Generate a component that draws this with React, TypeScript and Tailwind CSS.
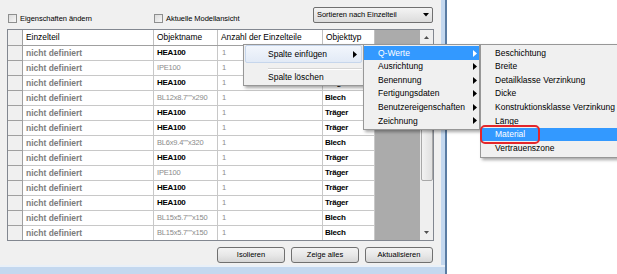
import React from 'react';

type Row = { name: string; bold: boolean; typ: string };

const rows: Row[] = [
  { name: 'HEA100', bold: true, typ: 'Träger' },
  { name: 'IPE100', bold: false, typ: 'Träger' },
  { name: 'HEA100', bold: true, typ: 'Träger' },
  { name: 'BL12x8.7""x290', bold: false, typ: 'Blech' },
  { name: 'HEA100', bold: true, typ: 'Träger' },
  { name: 'HEA100', bold: true, typ: 'Träger' },
  { name: 'BL6x9.4""x320', bold: false, typ: 'Blech' },
  { name: 'HEA100', bold: true, typ: 'Träger' },
  { name: 'IPE100', bold: false, typ: 'Träger' },
  { name: 'HEA100', bold: true, typ: 'Träger' },
  { name: 'HEA100', bold: true, typ: 'Träger' },
  { name: 'BL15x5.7""x150', bold: false, typ: 'Blech' },
  { name: 'BL15x5.7""x150', bold: false, typ: 'Blech' },
];

function RightArrow({ white }: { white?: boolean }) {
  return (
    <svg width="4" height="7" viewBox="0 0 4 7" className="block">
      <polygon points="0,0 4,3.5 0,7" fill={white ? '#ffffff' : '#000000'} />
    </svg>
  );
}

function Check({ label, className }: { label: string; className: string }) {
  return (
    <div className={`flex items-center gap-[3px] h-[9px] ${className}`}>
      <div className="w-[9px] h-[9px] border border-[#8e8f8f] bg-gradient-to-br from-[#dcdcdc] to-[#f6f6f6]" />
      <span className="text-[7.5px] leading-none tracking-[-0.05px]">{label}</span>
    </div>
  );
}

function Btn({ children }: { children: React.ReactNode }) {
  return (
    <div className="w-[68px] h-[16px] rounded-[3px] border border-[#707070] bg-gradient-to-b from-[#f3f3f3] via-[#e8e8e8] to-[#d6d6d6] flex items-center justify-center text-[7.5px] leading-none">
      {children}
    </div>
  );
}

function MenuItem({
  label,
  highlight,
  arrow,
}: {
  label: string;
  highlight?: boolean;
  arrow?: boolean;
}) {
  return (
    <div
      className={`relative h-[13.6px] flex items-center pl-[14px] text-[8.5px] leading-none ${
        highlight ? 'bg-[#3399ff] text-white' : 'text-black'
      }`}
    >
      <span>{label}</span>
      {arrow && (
        <div className="absolute right-[2px] top-[3.5px]">
          <RightArrow white={highlight} />
        </div>
      )}
    </div>
  );
}

export default function App() {
  return (
    <div className="relative w-[617px] h-[274px] overflow-hidden bg-white font-['Liberation_Sans',Arial,sans-serif] text-black">
      <div className="flex h-[274px]">
        <div className="flex flex-col w-[445px]">
          <div className="flex h-[265px]">
            {/* dialog */}
            <div className="w-[441px] h-full bg-[#f0f0f0] pl-[7px] pt-[7px] flex flex-col">
              {/* top row */}
              <div className="flex h-[22px] w-[427px] items-start">
                <Check label="Eigenschaften ändern" className="mt-[7px] ml-[1px] w-[146px]" />
                <Check label="Aktuelle Modellansicht" className="mt-[7px]" />
                <div className="ml-auto mr-[1px] w-[120px] h-[16px] rounded-[2px] border border-[#707070] bg-gradient-to-b from-[#f4f4f4] to-[#dcdcdc] flex items-center pl-[3px] pr-[3px]">
                  <span className="text-[7.5px] leading-none tracking-[-0.05px]">Sortieren nach Einzelteil</span>
                  <svg width="6" height="4" viewBox="0 0 6 4" className="ml-auto block">
                    <polygon points="0,0 6,0 3,3.5" fill="#000" />
                  </svg>
                </div>
              </div>

              {/* table */}
              <div className="w-[427px] h-[212px] border border-[#828790] bg-white flex overflow-hidden">
                <div className="w-[367px] flex flex-col">
                  {/* header */}
                  <div className="flex h-[16px] shrink-0 border-b border-[#a0a0a0] text-[8.4px] leading-none">
                    <div className="w-[15px] h-full bg-[#f0f0f0] border-r border-[#a0a0a0]" />
                    <div className="w-[131px] h-full flex items-center pl-[3px] border-r border-[#c0c0c0]">Einzelteil</div>
                    <div className="w-[64px] h-full flex items-center pl-[3px] border-r border-[#c0c0c0]">Objektname</div>
                    <div className="w-[105px] h-full flex items-center pl-[3px] border-r border-[#c0c0c0]">Anzahl der Einzelteile</div>
                    <div className="w-[52px] h-full flex items-center pl-[3px] border-r border-[#c0c0c0]">Objekttyp</div>
                  </div>
                  {rows.map((r, i) => (
                    <div key={i} className="flex h-[15px] shrink-0 leading-none">
                      <div className="w-[15px] h-full bg-[#f0f0f0] border-r border-b border-[#a0a0a0]" />
                      <div className="w-[131px] h-full flex items-center pl-[3px] border-r border-b border-[#c8c8c8] text-[8.5px] font-bold text-[#7c7c7c]">
                        nicht definiert
                      </div>
                      <div
                        className={`w-[64px] h-full flex items-center pl-[3px] border-r border-b border-[#c8c8c8] whitespace-nowrap overflow-hidden ${
                          r.bold
                            ? 'text-[8px] font-bold text-black tracking-[-0.3px]'
                            : 'text-[7.5px] text-[#8a8a8a] tracking-[-0.2px]'
                        }`}
                      >
                        {r.name}
                      </div>
                      <div className="w-[105px] h-full flex items-center pl-[4px] border-r border-b border-[#c8c8c8] text-[7.5px] text-[#8a8a8a]">
                        1
                      </div>
                      <div className="w-[52px] h-full flex items-center pl-[2px] border-r border-b border-[#c8c8c8] text-[8px] font-bold text-black tracking-[-0.2px]">
                        {r.typ}
                      </div>
                    </div>
                  ))}
                </div>
                <div className="w-[45px] h-full bg-[#ababab]" />
                {/* scrollbar */}
                <div className="w-[13px] h-full bg-[#efefef] flex flex-col">
                  <div className="h-[15px] shrink-0 flex items-center justify-center">
                    <svg width="5" height="3" viewBox="0 0 5 3" className="block">
                      <polygon points="0,3 5,3 2.5,0" fill="#505050" />
                    </svg>
                  </div>
                  <div className="h-[136px] shrink-0 mx-[0.5px] rounded-[2px] border border-[#a8a8a8] bg-gradient-to-r from-[#f2f2f2] to-[#e0e0e0]" />
                  <div className="flex-1" />
                  <div className="h-[15px] shrink-0 flex items-center justify-center">
                    <svg width="5" height="3" viewBox="0 0 5 3" className="block">
                      <polygon points="0,0 5,0 2.5,3" fill="#505050" />
                    </svg>
                  </div>
                </div>
              </div>

              {/* buttons */}
              <div className="mt-[6px] w-[426px] flex justify-end gap-[6px]">
                <Btn>Isolieren</Btn>
                <Btn>Zeige alles</Btn>
                <Btn>Aktualisieren</Btn>
              </div>
            </div>
            <div className="w-[4px] h-full bg-[#c4d8ef]" />
          </div>
          <div className="h-[2px] bg-[#e9f0f8]" />
          <div className="flex-1 bg-[#c4d8ef]" />
        </div>
        <div className="w-[2px] h-full bg-[#5a7ca3]" />
      </div>

      {/* context menu 1 */}
      <div className="absolute left-[243px] top-[44px] w-[121px] h-[42px] border border-[#979797] bg-[#f0f0f0] shadow-[2px_2px_3px_rgba(0,0,0,0.35)] text-[8.5px] leading-none">
        <div className="relative h-[18px] mx-[1px] rounded-[2px] border border-[#c6d6ec] bg-gradient-to-b from-[#f2f6fc] to-[#e2eaf6] flex items-center pl-[22px]">
          <span>Spalte einfügen</span>
          <div className="absolute right-[4px] top-[5px]">
            <RightArrow />
          </div>
        </div>
        <div className="h-[5px]" />
        <div className="ml-[24px] mr-[1px] h-[1px] bg-[#d5d5d5]" />
        <div className="ml-[24px] mr-[1px] h-[1px] bg-white" />
        <div className="h-[14px] flex items-center pl-[24px]">
          <span>Spalte löschen</span>
        </div>
      </div>

      {/* submenu 2 */}
      <div className="absolute left-[363px] top-[44px] w-[117px] h-[86px] border border-[#979797] bg-[#f0f0f0] pt-[1px] shadow-[2px_2px_3px_rgba(0,0,0,0.35)]">
        <MenuItem label="Q-Werte" highlight arrow />
        <MenuItem label="Ausrichtung" arrow />
        <MenuItem label="Benennung" arrow />
        <MenuItem label="Fertigungsdaten" arrow />
        <MenuItem label="Benutzereigenschaften" arrow />
        <MenuItem label="Zeichnung" arrow />
      </div>

      {/* submenu 3 */}
      <div className="absolute left-[480px] top-[44px] w-[160px] h-[114px] border border-[#979797] bg-[#f0f0f0] pt-[1px] shadow-[2px_2px_3px_rgba(0,0,0,0.35)]">
        <MenuItem label="Beschichtung" />
        <MenuItem label="Breite" />
        <MenuItem label="Detailklasse Verzinkung" />
        <MenuItem label="Dicke" />
        <MenuItem label="Konstruktionsklasse Verzinkung" />
        <MenuItem label="Länge" />
        <MenuItem label="Material" highlight />
        <MenuItem label="Vertrauenszone" />
      </div>

      {/* red marker */}
      <div className="absolute left-[480px] top-[125px] w-[60px] h-[19px] rounded-[5px] border-2 border-[#e3262b]" />
    </div>
  );
}
